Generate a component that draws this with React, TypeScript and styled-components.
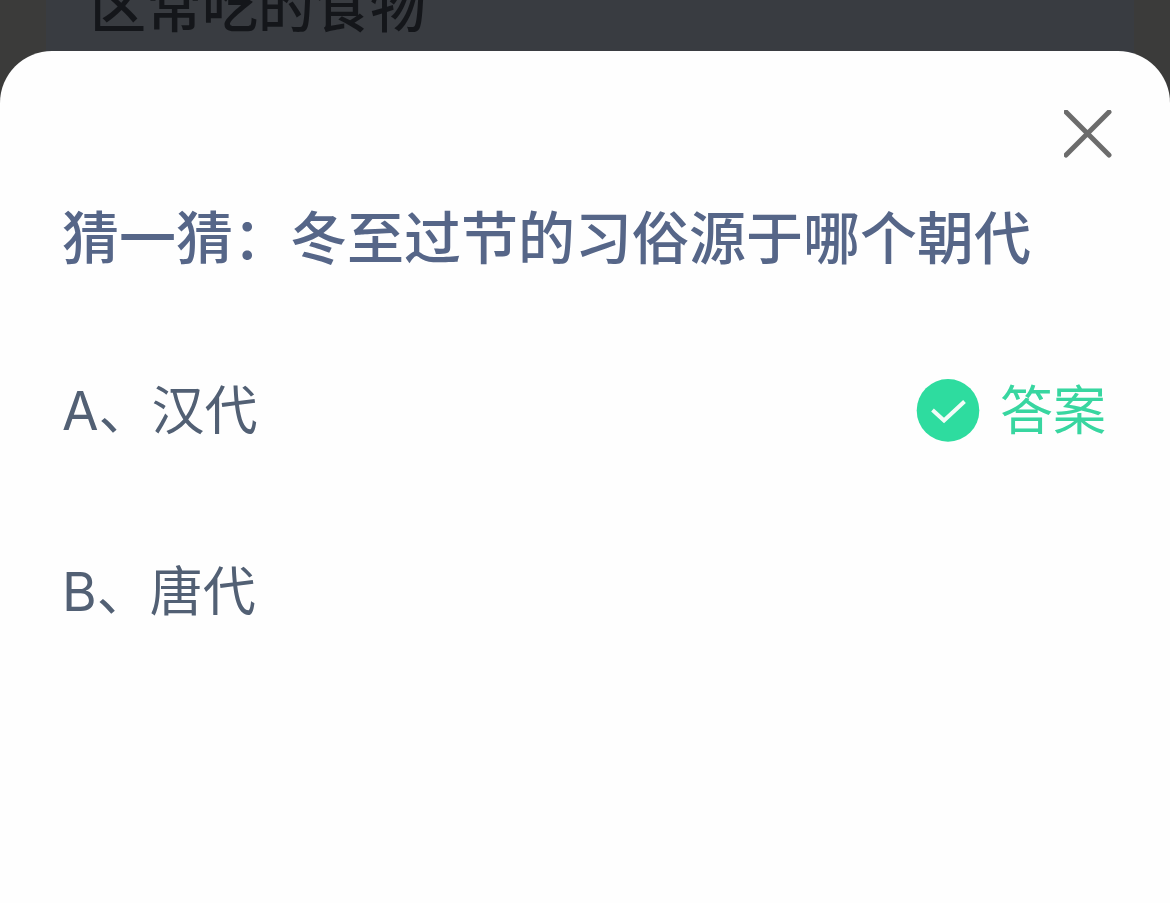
import React from 'react';
import styled, { createGlobalStyle } from 'styled-components';

const GlobalStyle = createGlobalStyle`
  * { box-sizing: border-box; }
  body {
    margin: 0;
    background: #3b3b3a;
    font-family: Inter, "Noto Sans CJK SC", sans-serif;
  }
`;

const Page = styled.div`
  display: flex;
  flex-direction: column;
  min-height: 100vh;
`;

const Backdrop = styled.div`
  display: flex;
  height: 51px;
  padding: 0 36px 0 46px;
`;

const Card = styled.div`
  flex: 1;
  display: flex;
  align-items: flex-end;
  height: 104px;
  padding: 0 44px 57px;
  background: #393c41;
`;

const CardText = styled.p`
  margin: 0;
  font-size: 56px;
  line-height: 80px;
  font-weight: 500;
  color: #14161a;
`;

const Sheet = styled.main`
  flex: 1;
  display: flex;
  flex-direction: column;
  padding: 53px 64px 60px 62px;
  border-radius: 52px 52px 0 0;
  background: #fefefe;
`;

const CloseButton = styled.button`
  align-self: flex-end;
  display: flex;
  margin-right: -12px;
  padding: 6px;
  border: 0;
  background: none;
  cursor: pointer;
`;

const Title = styled.h1`
  margin: 35px 0 0;
  font-size: 57px;
  line-height: 80px;
  font-weight: 500;
  color: #566688;
`;

const Options = styled.ul`
  display: flex;
  flex-direction: column;
  gap: 101px;
  margin: 92px 0 0;
  padding: 0;
  list-style: none;
`;

const Option = styled.li`
  display: flex;
  align-items: center;
  justify-content: space-between;
  font-size: 53px;
  line-height: 80px;
  color: #526074;
`;

const Answer = styled.span`
  display: flex;
  align-items: center;
  gap: 20px;
  color: #38d6a0;
`;

export default function App() {
  return (
    <Page lang="zh-CN">
      <GlobalStyle />
      <Backdrop>
        <Card>
          <CardText>区常吃的食物</CardText>
        </Card>
      </Backdrop>
      <Sheet>
        <CloseButton type="button" aria-label="关闭">
          <svg width="48" height="48" viewBox="0 0 48 48" fill="none" stroke="#6c6c6c" strokeWidth="5" strokeLinecap="round">
            <path d="M2 2L45 45M45 2L2 45" />
          </svg>
        </CloseButton>
        <Title>猜一猜：冬至过节的习俗源于哪个朝代</Title>
        <Options>
          <Option>
            <span>A、汉代</span>
            <Answer>
              <svg width="64" height="64" viewBox="0 0 64 64" fill="none" aria-hidden="true">
                <circle cx="32" cy="31.4" r="31.3" fill="#2edc9f" />
                <path d="M16.5 31L28 41.5L48.5 22.5" stroke="#f2fdf8" strokeWidth="4" />
              </svg>
              答案
            </Answer>
          </Option>
          <Option>
            <span>B、唐代</span>
          </Option>
        </Options>
      </Sheet>
    </Page>
  );
}
